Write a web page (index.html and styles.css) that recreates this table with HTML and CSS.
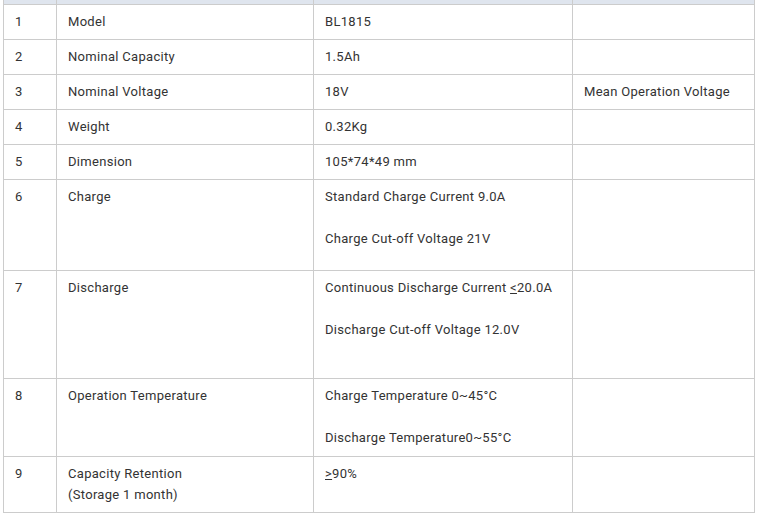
FILE: index.html
```html
<!DOCTYPE html>
<html lang="en">
<head>
<meta charset="utf-8">
<title>BL1815 Specifications</title>
<link rel="stylesheet" href="styles.css">
</head>
<body>
<table class="spec">
  <colgroup>
    <col class="c-no">
    <col class="c-item">
    <col class="c-val">
    <col class="c-note">
  </colgroup>
  <thead>
    <tr class="head"><th></th><th></th><th></th><th></th></tr>
  </thead>
  <tbody>
    <tr><td>1</td><td>Model</td><td>BL1815</td><td></td></tr>
    <tr><td>2</td><td>Nominal Capacity</td><td>1.5Ah</td><td></td></tr>
    <tr><td>3</td><td>Nominal Voltage</td><td>18V</td><td>Mean Operation Voltage</td></tr>
    <tr><td>4</td><td>Weight</td><td>0.32Kg</td><td></td></tr>
    <tr><td>5</td><td>Dimension</td><td>105*74*49 mm</td><td></td></tr>
    <tr class="tall-a"><td>6</td><td>Charge</td><td><p>Standard Charge Current 9.0A</p><p>Charge Cut-off Voltage 21V</p></td><td></td></tr>
    <tr class="tall-b"><td>7</td><td>Discharge</td><td><p>Continuous Discharge Current <span class="u">&lt;</span>20.0A</p><p>Discharge Cut-off Voltage 12.0V</p></td><td></td></tr>
    <tr class="tall-c"><td>8</td><td>Operation Temperature</td><td><p>Charge Temperature 0~45°C</p><p>Discharge Temperature0~55°C</p></td><td></td></tr>
    <tr><td>9</td><td>Capacity Retention<br>(Storage 1 month)</td><td><span class="u">&gt;</span>90%</td><td></td></tr>
  </tbody>
</table>
</body>
</html>
```

FILE: styles.css
```css
html, body {
  margin: 0;
  padding: 0;
  background: #ffffff;
}

body {
  padding-left: 3px;
  font-family: Roboto, "Liberation Sans", sans-serif;
  font-size: 13px;
  letter-spacing: 0.3px;
  color: #333333;
}

.spec {
  border-collapse: collapse;
  width: 751px;
  table-layout: fixed;
}

.c-no { width: 53px; }
.c-item { width: 257px; }
.c-val { width: 259px; }
.c-note { width: 182px; }

.spec th,
.spec td {
  border: 1px solid #cccccc;
  padding: 6px 11px 7px;
  line-height: 21px;
  text-align: left;
  vertical-align: top;
}

.spec .head th {
  background: #dfe5ee;
  height: 4px;
  padding: 0;
  border-top: none;
  line-height: 0;
}

.spec p {
  margin: 0;
}

.spec p + p {
  margin-top: 21px;
}

.spec .tall-a td {
  padding-bottom: 21px;
}

.spec .tall-b td {
  padding-bottom: 38px;
}

.spec .tall-c td {
  padding-bottom: 8px;
}

.u {
  text-decoration: underline;
  text-underline-offset: 1px;
}
```
